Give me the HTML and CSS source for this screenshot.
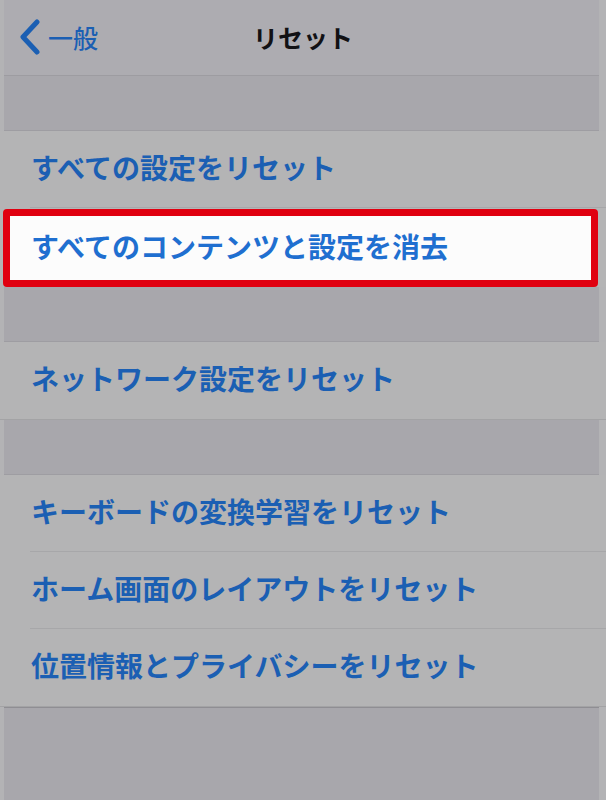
FILE: index.html
```html
<!DOCTYPE html>
<html lang="ja">
<head>
<meta charset="utf-8">
<title>リセット</title>
<link rel="stylesheet" href="styles.css">
</head>
<body>
<div class="screen">
  <header class="nav">
    <div class="back">
      <svg class="chev" width="24" height="36" viewBox="0 0 24 36" aria-hidden="true">
        <path d="M19 3 L5 18 L19 33" fill="none" stroke="#1b5fb3" stroke-width="5" stroke-linecap="round" stroke-linejoin="round"/>
      </svg>
      <span class="back-label">一般</span>
    </div>
    <div class="title">リセット</div>
    <div class="spacer"></div>
  </header>
  <div class="gap"></div>
  <div class="group first">
    <div class="row"><span class="label">すべての設定をリセット</span></div>
    <div class="row hl"><span class="label">すべてのコンテンツと設定を消去</span></div>
  </div>
  <div class="gap"></div>
  <div class="group">
    <div class="row last"><span class="label">ネットワーク設定をリセット</span></div>
  </div>
  <div class="gap"></div>
  <div class="group">
    <div class="row"><span class="label">キーボードの変換学習をリセット</span></div>
    <div class="row"><span class="label">ホーム画面のレイアウトをリセット</span></div>
    <div class="row last"><span class="label">位置情報とプライバシーをリセット</span></div>
  </div>
  <div class="gap fill"></div>
</div>
</body>
</html>
```
FILE: styles.css
```css
html, body {
  margin: 0;
  padding: 0;
  background: #b3b3b5;
}
body {
  width: 606px;
  height: 800px;
  overflow: hidden;
  font-family: "Noto Sans CJK JP", "Noto Sans", sans-serif;
}
.screen {
  display: flex;
  flex-direction: column;
  height: 800px;
}
.nav {
  height: 75px;
  border-bottom: 1px solid #9d9ca1;
  background: #adacb1;
  margin: 0 7px 0 4px;
  display: grid;
  grid-template-columns: 1fr auto 1fr;
  align-items: center;
}
.back {
  display: flex;
  align-items: center;
  gap: 6px;
  padding-left: 14px;
  color: #1b5fb3;
}
.chev {
  display: block;
  margin-top: -2px;
}
.back-label {
  font-size: 25px;
  font-weight: 500;
  line-height: 1;
}
.title {
  font-size: 25px;
  font-weight: 700;
  color: #111114;
  line-height: 1;
  margin-top: 0;
  margin-left: 3px;
}
.gap {
  height: 54px;
  background: #a8a7ac;
  border-bottom: 1px solid #9e9da2;
  margin: 0 7px 0 4px;
}
.gap.fill {
  flex: 1;
  border-bottom: none;
  border-top: 1px solid #8f8e93;
}
.group {
  background: #b4b4b5;
  border-bottom: 1px solid #a3a3a5;
}
.group.first {
  border-bottom: none;
}
.row {
  height: 77px;
  box-sizing: border-box;
  padding-bottom: 5px;
  margin-left: 30px;
  border-bottom: 1px solid #a7a7a9;
  display: flex;
  align-items: center;
  padding-left: 1px;
}
.row.last {
  border-bottom: none;
  margin-left: 0;
  padding-left: 31px;
}
.row.hl {
  height: 78px;
  margin: 1px 8px 0 3px;
  padding-left: 21px;
  padding-bottom: 4px;
  border: 7px solid #e00010;
  border-radius: 4px;
  background: #fcfcfc;
}
.label {
  font-size: 28px;
  font-weight: 700;
  color: #1b5fb3;
  line-height: 1;
  white-space: nowrap;
}
.row.hl .label {
  color: #1f6fd0;
}
```
